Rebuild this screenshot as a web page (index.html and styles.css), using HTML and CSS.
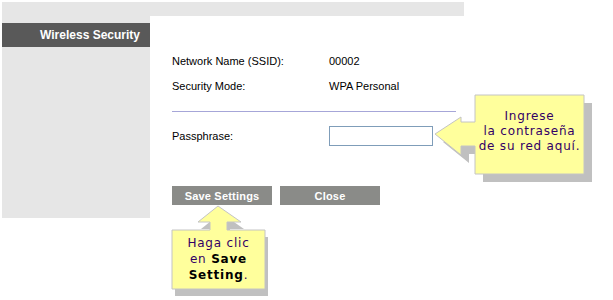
FILE: index.html
```html
<!DOCTYPE html>
<html lang="en">
<head>
    <meta charset="UTF-8">
    <title>Wireless Security</title>
    <link rel="stylesheet" href="styles.css">
</head>
<body>
    <div class="frame">
        <div class="top-strip"></div>
        <div class="main">
            <div class="side">
                <div class="side-title">Wireless Security</div>
            </div>
            <div class="content">
                <div class="row">
                    <span class="label">Network Name (SSID):</span>
                    <span class="value">00002</span>
                </div>
                <div class="row">
                    <span class="label">Security Mode:</span>
                    <span class="value">WPA Personal</span>
                </div>
                <hr class="divider">
                <div class="row pass-row">
                    <span class="label">Passphrase:</span>
                    <input type="text" class="pass-input">
                </div>
                <div class="buttons">
                    <button class="btn">Save Settings</button>
                    <button class="btn">Close</button>
                </div>
            </div>
        </div>
    </div>

    <!-- tip pointing at the passphrase box -->
    <div class="callout callout-pass">
        <svg width="170" height="100" viewBox="0 0 170 100">
            <path class="shade" transform="translate(8,8)" d="M45,5 H154 V84 H45 V56 H31 V65 L5,44 L31,27 V32 H45 Z"/>
            <path class="note" d="M45,5 H154 V84 H45 V56 H31 V65 L5,44 L31,27 V32 H45 Z"/>
        </svg>
        <div class="callout-text">Ingrese<br>la contraseña<br>de su red aquí.</div>
    </div>

    <!-- tip pointing at the save button -->
    <div class="callout callout-save">
        <svg width="110" height="100" viewBox="0 0 110 100">
            <path class="shade" transform="translate(3,7)" d="M7,30 H45 V22 H33 L53,6 L76,22 H62 V30 H100 V89 H7 Z"/>
            <path class="note" d="M7,30 H45 V22 H33 L53,6 L76,22 H62 V30 H100 V89 H7 Z"/>
        </svg>
        <div class="callout-text">Haga clic<br>en <b>Save</b><br><b>Setting</b>.</div>
    </div>
</body>
</html>
```

FILE: styles.css
```css
* {
    box-sizing: border-box;
    margin: 0;
    padding: 0;
}

body {
    position: relative;
    width: 613px;
    height: 300px;
    background: #fff;
    font-family: "Liberation Sans", Arial, sans-serif;
    font-size: 11px;
    color: #000;
    overflow: hidden;
}

.frame {
    margin: 2px;
    width: 462px;
}

.top-strip {
    height: 14px;
    background: #e6e6e6;
}

.main {
    display: flex;
}

.side {
    width: 148px;
    height: 202px;
    padding-top: 7px;
    background: #e6e6e6;
}

.side-title {
    height: 24px;
    line-height: 24px;
    padding-right: 10px;
    background: #595959;
    color: #fff;
    font-size: 12px;
    font-weight: bold;
    text-align: right;
}

.content {
    flex: 1;
    padding: 32px 0 0 22px;
}

.row {
    display: flex;
    align-items: center;
    height: 25px;
}

.label {
    width: 157px;
}

.divider {
    width: 284px;
    border: none;
    border-top: 1px solid #a6a6d8;
    margin: 13px 0 13px;
}

.pass-row {
    height: 22px;
}

.pass-input {
    width: 104px;
    height: 20px;
    border: 1px solid #7f9db9;
    background: #fff;
}

.buttons {
    display: flex;
    gap: 8px;
    margin-top: 39px;
}

.btn {
    width: 100px;
    height: 19px;
    border: none;
    background: #8a8b88;
    color: #fff;
    font-family: "Liberation Sans", Arial, sans-serif;
    font-size: 11px;
    font-weight: bold;
    letter-spacing: 0.2px;
}

.callout {
    position: absolute;
}

.callout svg {
    display: block;
}

.shade {
    fill: #c0c0c0;
}

.note {
    fill: #ffff9c;
    stroke: #c4c4c4;
    stroke-width: 1;
}

.callout-text {
    position: absolute;
    text-align: center;
    font-family: "DejaVu Sans", Verdana, sans-serif;
    font-size: 12px;
    letter-spacing: 0.8px;
    color: #330066;
}

.callout-text b {
    color: #000;
}

.callout-pass {
    left: 430px;
    top: 90px;
}

.callout-pass .callout-text {
    left: 45px;
    top: 19px;
    width: 109px;
    line-height: 15px;
}

.callout-save {
    left: 165px;
    top: 200px;
}

.callout-save .callout-text {
    left: 7px;
    top: 35px;
    width: 93px;
    line-height: 16px;
}
```
